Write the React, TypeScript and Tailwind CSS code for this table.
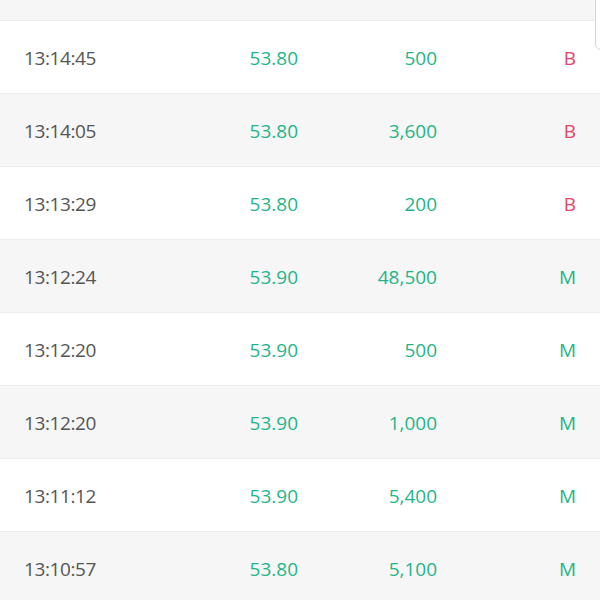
import React from "react";

type TradeRow = {
  time: string;
  price: string;
  volume: string;
  side: "B" | "S" | "M";
};

const trades: TradeRow[] = [
  { time: "13:14:45", price: "53.80", volume: "500", side: "B" },
  { time: "13:14:05", price: "53.80", volume: "3,600", side: "B" },
  { time: "13:13:29", price: "53.80", volume: "200", side: "B" },
  { time: "13:12:24", price: "53.90", volume: "48,500", side: "M" },
  { time: "13:12:20", price: "53.90", volume: "500", side: "M" },
  { time: "13:12:20", price: "53.90", volume: "1,000", side: "M" },
  { time: "13:11:12", price: "53.90", volume: "5,400", side: "M" },
  { time: "13:10:57", price: "53.80", volume: "5,100", side: "M" },
];

const App = () => {
  return (
    <div
      className="relative w-[600px] h-[600px] overflow-hidden bg-white"
      style={{ fontFamily: '"Open Sans", "Noto Sans", sans-serif' }}
    >
      {/* partial row cut off at the top */}
      <div className="h-[21px] bg-[#f6f6f6] border-b border-[#ececec]" />

      {trades.map((item, idx) => (
        <div
          key={`trade${idx}`}
          className={`flex items-center h-[73px] px-6 pt-[2px] border-b border-[#ececec] text-[19px] ${
            idx % 2 === 1 ? "bg-[#f6f6f6]" : "bg-white"
          }`}
        >
          <div className="w-[154px] text-[#555555] tracking-[-0.4px]">{item.time}</div>
          <div className="w-[120px] text-right text-[#1fb589]">{item.price}</div>
          <div className="w-[139px] text-right text-[#1fb589]">{item.volume}</div>
          <div
            className={`w-[139px] text-right ${
              item.side === "B" ? "text-[#e2456b]" : "text-[#1fb589]"
            }`}
          >
            {item.side}
          </div>
        </div>
      ))}

      {/* scrollbar thumb peeking in at the edge */}
      <div className="absolute top-[-10px] left-[595px] w-[12px] h-[60px] rounded-[6px] border border-[#d6d6d6] bg-white" />
    </div>
  );
};

export default App;
